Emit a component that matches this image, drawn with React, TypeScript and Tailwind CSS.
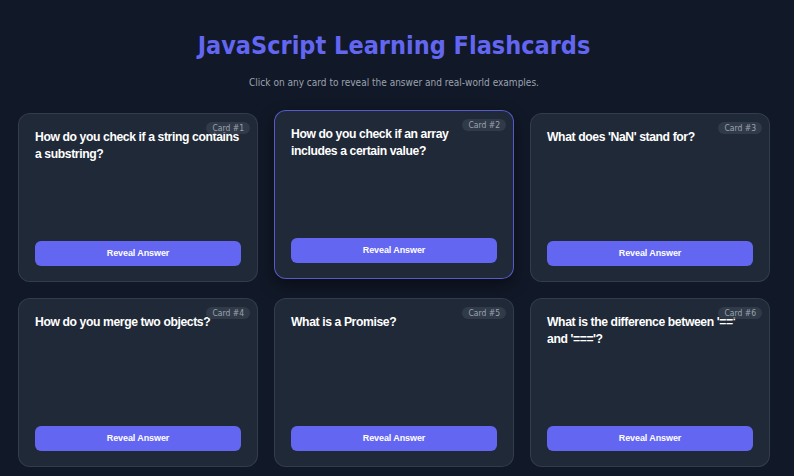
const cards = [
  "How do you check if a string contains a substring?",
  "How do you check if an array\nincludes a certain value?",
  "What does 'NaN' stand for?",
  "How do you merge two objects?",
  "What is a Promise?",
  "What is the difference between '=='\nand '==='?",
];

function Flashcard({ question, index, active }: { question: string; index: number; active?: boolean }) {
  return (
    <div
      className={
        "relative flex flex-col h-[169px] rounded-xl border bg-[#1f2937] px-4 pt-[15px] pb-[15px] " +
        (active
          ? "-translate-y-[3px] border-[#6366f1]/80 shadow-[0_6px_16px_rgba(0,0,0,0.45)]"
          : "border-[#374151]/80")
      }
    >
      <span className="absolute top-[8px] right-[7px] rounded-full bg-[#374151]/70 px-[6px] py-[1px] text-[8.5px] leading-[10px] text-[#9ca3af]">
        Card #{index}
      </span>
      <h3 className="whitespace-pre-line font-['Liberation_Sans',Arial,sans-serif] text-[12.2px] font-bold leading-[17px] tracking-[-0.4px] text-white">
        {question}
      </h3>
      <button className="mt-auto h-[25px] w-full rounded-md bg-[#6366f1] font-['Liberation_Sans',Arial,sans-serif] text-[9px] font-bold tracking-[-0.1px] text-white">
        Reveal Answer
      </button>
    </div>
  );
}

export default function App() {
  return (
    <div className="min-h-[476px] bg-[#111827] font-['DejaVu_Sans_Condensed','DejaVu_Sans',sans-serif] pl-[18px] pr-[24px] pt-[28px] pb-[10px]">
      <h1 className="text-center text-[25px] font-bold leading-[36px] text-[#6366f1]">
        JavaScript Learning Flashcards
      </h1>
      <p className="mt-[12px] text-center text-[10px] leading-[14px] text-[#9ca3af]">
        Click on any card to reveal the answer and real-world examples.
      </p>
      <div className="mt-[23px] grid grid-cols-[240px_240px_240px] gap-4">
        {cards.map((q, i) => (
          <Flashcard key={i} question={q} index={i + 1} active={i === 1} />
        ))}
      </div>
    </div>
  );
}
